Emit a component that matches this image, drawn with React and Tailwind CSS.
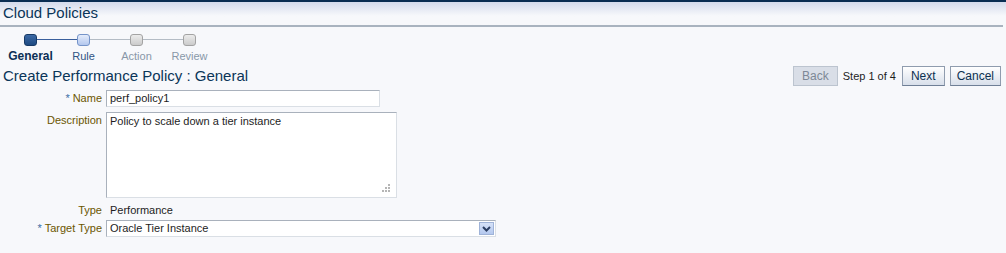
const steps = [
  { label: "General", state: "done" },
  { label: "Rule", state: "next" },
  { label: "Action", state: "off" },
  { label: "Review", state: "off" },
];

const boxStyles = {
  done: "bg-gradient-to-b from-[#3c6aa6] to-[#1d4a82] border-[#173a66]",
  next: "bg-gradient-to-b from-[#e4ecfb] to-[#b3c7ee] border-[#7594c9]",
  off: "bg-gradient-to-b from-[#ececec] to-[#cbcbcb] border-[#a3a3a3]",
};

const labelStyles = {
  done: "text-[#0b2f55] font-bold text-[12px]",
  next: "text-[#2f5384] text-[11px]",
  off: "text-[#8897a8] text-[11px]",
};

const Train = () => (
  <div className="flex pl-[4px] pt-[6px]">
    {steps.map((s, i) => {
      const leftColor = i === 0 ? "bg-transparent" : i === 1 ? "bg-[#3a5f9c]" : "bg-[#b4bcc5]";
      const rightColor = i === 3 ? "bg-transparent" : i === 0 ? "bg-[#3a5f9c]" : "bg-[#b4bcc5]";
      return (
        <div key={s.label} className="w-[53px] flex flex-col items-center">
          <div className="flex items-center w-full h-[13px]">
            <div className={`flex-1 h-px ${leftColor}`}></div>
            <div className={`w-[13px] h-[12px] rounded-[3px] border ${boxStyles[s.state]}`}></div>
            <div className={`flex-1 h-px ${rightColor}`}></div>
          </div>
          <div className={`mt-[3px] leading-[14px] whitespace-nowrap ${labelStyles[s.state]}`}>{s.label}</div>
        </div>
      );
    })}
  </div>
);

const Btn = ({ children, disabled, wide }) => (
  <button
    className={
      (wide ? "px-[8px] " : "px-[6px] ") +
      (disabled
        ? "h-[20px] text-[12px] border border-[#bcc4cf] bg-[#d9dee7] text-[#7d8896]"
        : "h-[20px] text-[12px] border border-[#8f9cae] border-b-[#6f7f96] bg-gradient-to-b from-white to-[#d8dfea] text-[#0c3050]")
    }
  >
    {children}
  </button>
);

const Label = ({ children, required }) => (
  <div className="text-right text-[11px] text-[#6b5600] whitespace-nowrap">
    {required && <span className="text-[#3a6ea5] mr-[3px]">*</span>}
    {children}
  </div>
);

export default function App() {
  return (
    <div className="w-full h-[253px] bg-[#f7f8fb] font-['Liberation_Sans',Arial,sans-serif] overflow-hidden">
      <div className="border-t-2 border-[#0a2d52] bg-gradient-to-b from-[#d4dbec] to-[#f7f8fb] to-60% h-[25px] pl-[3px] flex items-end">
        <div className="text-[15px] text-[#0a3558] leading-[20px] pb-[2px]">Cloud Policies</div>
      </div>
      <div className="h-[2px] bg-[#a9b3bf] mr-[3px]"></div>

      <Train />

      <div className="flex items-center justify-between pl-[3px] pr-[5px] mt-[3px] h-[20px]">
        <div className="text-[15px] text-[#0a3558] leading-[18px]">Create Performance Policy : General</div>
        <div className="flex items-center">
          <Btn disabled wide>Back</Btn>
          <span className="text-[11px] text-[#1d1d1d] ml-[5px] mr-[6px]">Step 1 of 4</span>
          <Btn wide>Next</Btn>
          <div className="w-[5px]"></div>
          <Btn>Cancel</Btn>
        </div>
      </div>

      <div className="grid grid-cols-[102px_auto] gap-x-[4px] gap-y-[5px] mt-[4px] items-center justify-start">
        <Label required>Name</Label>
        <div className="w-[274px] h-[17px] bg-white border border-[#a9b1bc] border-r-[#dadfe5] border-b-[#dadfe5] text-[11px] text-[#1d1d1d] pl-[3px] leading-[15px]">
          perf_policy1
        </div>

        <div className="self-start">
          <Label>Description</Label>
        </div>
        <div className="relative w-[291px] h-[86px] bg-white border border-[#a9b1bc] border-r-[#dadfe5] border-b-[#dadfe5] text-[11px] text-[#1d1d1d] pl-[3px] pt-[1px] leading-[15px]">
          Policy to scale down a tier instance
          <svg className="absolute right-[5px] bottom-[4px]" width="10" height="10" viewBox="0 0 10 10">
            <g fill="#b5b5b5">
              <rect x="7" y="1" width="2" height="2" />
              <rect x="4" y="4" width="2" height="2" />
              <rect x="7" y="4" width="2" height="2" />
              <rect x="1" y="7" width="2" height="2" />
              <rect x="4" y="7" width="2" height="2" />
              <rect x="7" y="7" width="2" height="2" />
            </g>
          </svg>
        </div>

        <div className="h-[14px] leading-[14px]">
          <Label>Type</Label>
        </div>
        <div className="h-[14px] text-[11px] text-[#1d1d1d] pl-[4px] leading-[14px]">Performance</div>

        <div className="-mt-[2px]">
          <Label required>Target Type</Label>
        </div>
        <div className="-mt-[2px] w-[390px] h-[17px] bg-white border border-[#a9b1bc] border-r-[#dadfe5] border-b-[#dadfe5] flex items-center justify-between pl-[3px] pr-[1px]">
          <span className="text-[11px] text-[#1d1d1d]">Oracle Tier Instance</span>
          <div className="w-[15px] h-[13px] bg-gradient-to-b from-[#d6e2f8] to-[#b4c8ee] border border-[#9fb3d8] flex items-center justify-center">
            <svg width="9" height="6" viewBox="0 0 9 6">
              <path d="M1 1 L4.5 4.5 L8 1" fill="none" stroke="#2c3f63" strokeWidth="2" />
            </svg>
          </div>
        </div>
      </div>
    </div>
  );
}
